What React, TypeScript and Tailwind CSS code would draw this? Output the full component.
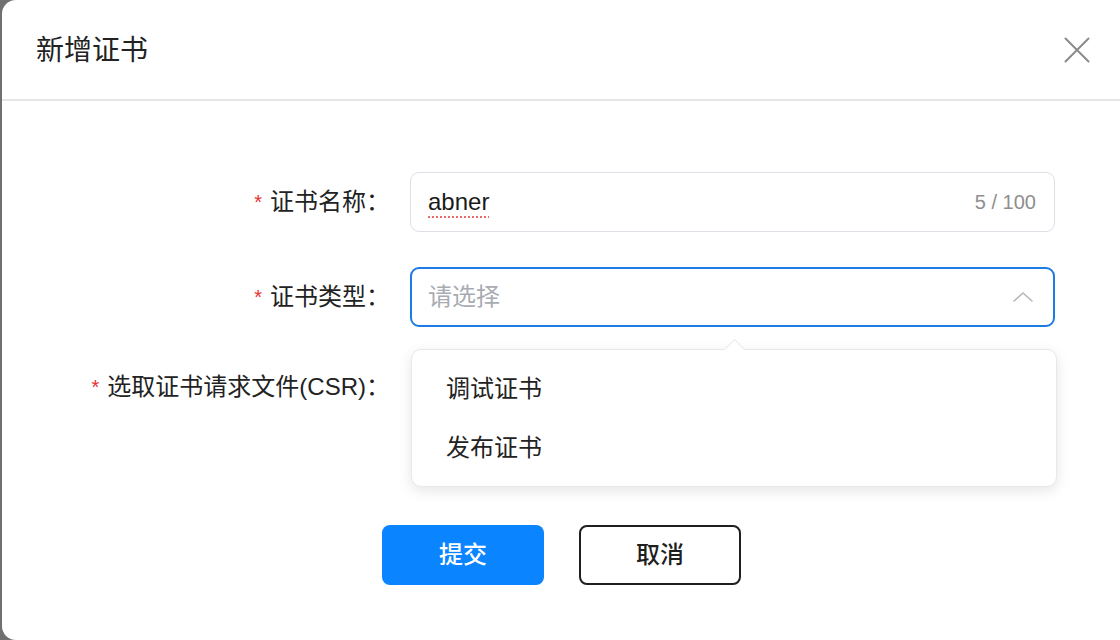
import React from 'react'

const FONT = { fontFamily: '"Liberation Sans", "Noto Sans CJK SC", sans-serif' }

function Label({ text }: { text: string }) {
  return (
    <div className="w-[408px] shrink-0 flex justify-end items-center pr-[20px] text-[24px] text-[#222]">
      <span className="text-[#e8322f] text-[20px] mr-[8px] leading-none">*</span>
      <span>{text}：</span>
    </div>
  )
}

function CloseIcon() {
  return (
    <svg width="26" height="26" viewBox="0 0 26 26" fill="none">
      <path d="M1.5 1.5L24.5 24.5M24.5 1.5L1.5 24.5" stroke="#8a8a8a" strokeWidth="2" strokeLinecap="round" />
    </svg>
  )
}

function ChevronUp() {
  return (
    <svg width="20" height="10" viewBox="0 0 20 10" fill="none">
      <path d="M1 9L10 1L19 9" stroke="#b4b4b4" strokeWidth="1.5" strokeLinecap="round" strokeLinejoin="round" />
    </svg>
  )
}

export default function App() {
  const options = ['调试证书', '发布证书']

  return (
    <div className="w-[1120px] h-[640px] bg-[#707070] flex overflow-hidden" style={FONT}>
      <div className="flex-1 ml-[2px] bg-white rounded-l-[14px] flex flex-col">
        <div className="h-[101px] shrink-0 flex items-center justify-between pl-[34px] pr-[30px] border-b-2 border-[#e6e6e6]">
          <h2 className="text-[28px] text-[#222] leading-none pt-[2px]">新增证书</h2>
          <CloseIcon />
        </div>

        <div className="pt-[71px] flex flex-col">
          <div className="flex items-center h-[60px]">
            <Label text="证书名称" />
            <div className="w-[645px] h-[60px] rounded-[9px] border border-[#dcdfe6] flex items-center justify-between pl-[17px] pr-[18px]">
              <span className="text-[24px] text-[#1a1a1a] underline decoration-dotted decoration-[#ea6b6b] decoration-2 underline-offset-[6px]">
                abner
              </span>
              <span className="text-[20px] text-[#8e8e8e]">5 / 100</span>
            </div>
          </div>

          <div className="flex items-center h-[60px] mt-[35px]">
            <Label text="证书类型" />
            <div className="relative w-[645px] h-[60px]">
              <div className="h-full rounded-[9px] border-2 border-[#1c7be4] flex items-center justify-between pl-[16px] pr-[20px]">
                <span className="text-[24px] text-[#a8abb2]">请选择</span>
                <ChevronUp />
              </div>
              <div className="absolute left-[1px] top-[82px] w-[646px] z-10 bg-white rounded-[10px] border border-[#e6e8ec] shadow-[0_4px_14px_rgba(0,0,0,0.1)] py-[9px]">
                <div className="absolute -top-[8px] left-[315px] w-[15px] h-[15px] rotate-45 bg-white border-l border-t border-[#e6e8ec]" />
                {options.map((o) => (
                  <div key={o} className="relative h-[59px] px-[34px] flex items-center text-[24px] text-[#222]">
                    {o}
                  </div>
                ))}
              </div>
            </div>
          </div>

          <div className="flex items-center h-[60px] mt-[30px]">
            <Label text="选取证书请求文件(CSR)" />
          </div>

          <div className="flex gap-[35px] pl-[380px] mt-[108px]">
            <button className="w-[162px] h-[60px] rounded-[8px] bg-[#0a84ff] text-white text-[24px] font-medium">
              提交
            </button>
            <button className="w-[162px] h-[60px] rounded-[8px] border-2 border-[#1f1f1f] bg-white text-[#1f1f1f] text-[24px] font-medium">
              取消
            </button>
          </div>
        </div>
      </div>
    </div>
  )
}
